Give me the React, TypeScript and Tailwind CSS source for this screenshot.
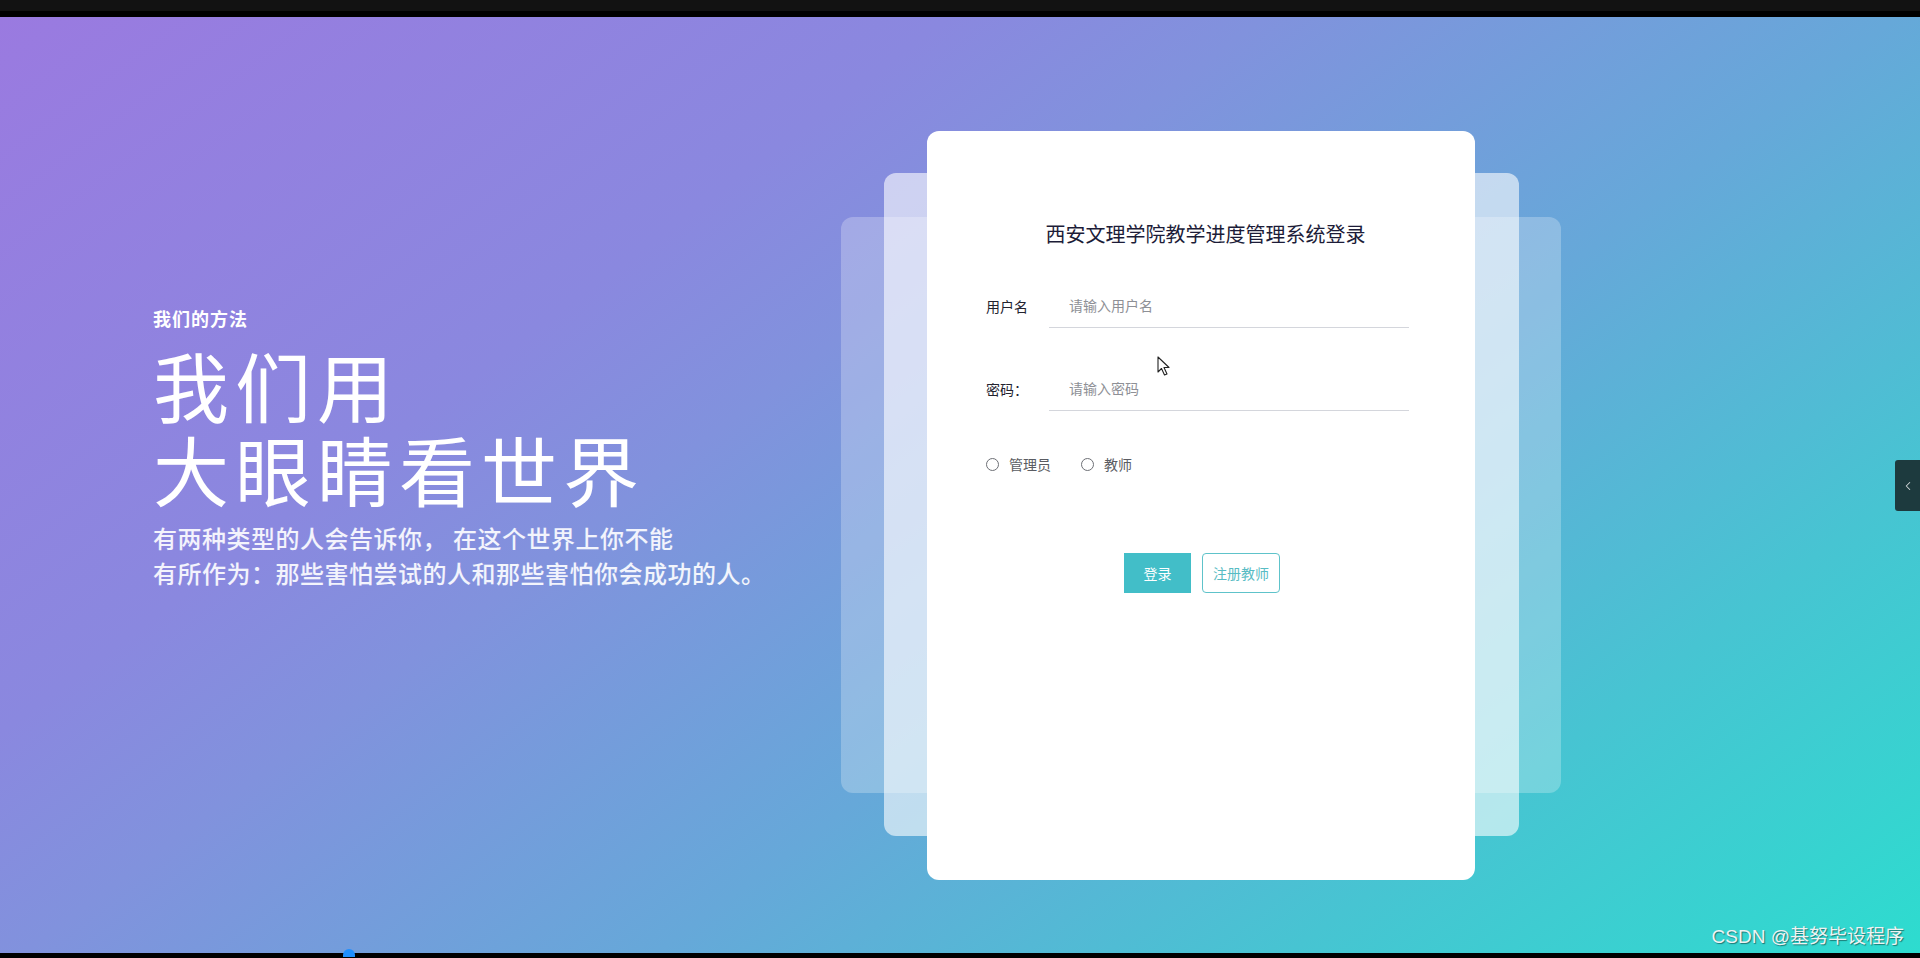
import React from "react";
import { ChevronLeft } from "lucide-react";

const cjk = "font-['Noto_Sans_CJK_SC','Noto_Sans',sans-serif]";

function Field({ label, placeholder }: { label: string; placeholder: string }) {
  return (
    <div className="flex items-center">
      <div className="w-[63px] text-[14px] text-[#23232f]">{label}</div>
      <div className="w-[360px] h-[44px] border-b border-[#d4d6dc] flex items-center pl-[20px]">
        <input
          className="w-full bg-transparent outline-none text-[14px] text-[#333] placeholder:text-[#8e9096]"
          placeholder={placeholder}
        />
      </div>
    </div>
  );
}

function Radio({ label }: { label: string }) {
  return (
    <label className="flex items-center gap-[10px] text-[14px] text-[#5a5c62]">
      <span className="w-[13px] h-[13px] rounded-full border border-[#6d6f75] bg-white" />
      {label}
    </label>
  );
}

export default function App() {
  return (
    <div className={`w-[1920px] h-[958px] bg-black flex flex-col overflow-hidden relative ${cjk}`}>
      {/* top bar */}
      <div className="h-[11px] bg-[#121212]" />
      <div className="h-[6px] bg-black" />

      <main className="relative h-[936px] flex bg-[linear-gradient(143deg,#9a7ae0_0%,#8a88df_30%,#8192dd_40%,#66a8d9_60%,#47c4d2_80%,#2ddccf_100%)]">
        {/* left copy */}
        <div className="w-[841px] pl-[153px] pt-[289px] text-white">
          <div className="text-[18px] leading-[24px] font-bold tracking-[1px]">我们的方法</div>
          <h1 className="mt-[12px] text-[76px] leading-[84px] font-normal tracking-[6px]">
            我们用
            <br />
            大眼睛看世界
          </h1>
          <p className="mt-[10px] text-[24px] leading-[35px] font-medium tracking-[0.5px] text-white/90">
            有两种类型的人会告诉你， 在这个世界上你不能
            <br />
            有所作为：那些害怕尝试的人和那些害怕你会成功的人。
          </p>
        </div>

        {/* login card stack */}
        <div className="relative w-[720px] h-[749px] mt-[114px]">
          <div className="absolute left-0 top-[86px] w-[720px] h-[576px] rounded-[12px] bg-white/25" />
          <div className="absolute left-[43px] top-[42px] w-[635px] h-[663px] rounded-[12px] bg-white/60" />
          <div className="relative mx-auto w-[548px] h-[749px] rounded-[12px] bg-white pl-[59px] pt-[89px]">
            <h2 className="w-[423px] text-center pl-[16px] text-[20px] leading-[28px] text-[#1c1c38]">
              西安文理学院教学进度管理系统登录
            </h2>
            <div className="mt-[36px] flex flex-col gap-[39px]">
              <Field label="用户名" placeholder="请输入用户名" />
              <Field label="密码：" placeholder="请输入密码" />
            </div>
            <div className="mt-[43px] h-[20px] flex items-center gap-[30px]">
              <Radio label="管理员" />
              <Radio label="教师" />
            </div>
            <div className="mt-[79px] flex justify-center gap-[11px] pr-[57px]">
              <button className="w-[67px] h-[40px] bg-[#42bec8] text-white text-[14px]">登录</button>
              <button className="w-[78px] h-[40px] rounded-[4px] border border-[#5ec3ca] bg-white text-[#58bcc4] text-[14px]">
                注册教师
              </button>
            </div>
          </div>
        </div>

        {/* mouse pointer */}
        <svg className="absolute left-[1157px] top-[339px]" width="14" height="21" viewBox="0 0 14 21">
          <path d="M1 1 L1 16 L4.5 12.5 L7.5 19 L10 18 L7 11.5 L12 11.5 Z" fill="#fff" stroke="#222" strokeWidth="1.1" strokeLinejoin="round" />
        </svg>

        {/* side tab */}
        <div className="absolute right-0 top-[443px] w-[25px] h-[51px] rounded-l-[3px] bg-[#1d3a3e] flex items-center justify-center">
          <ChevronLeft className="w-[14px] h-[14px] text-[#d0d6d8]" strokeWidth={1.8} />
        </div>

        {/* watermark */}
        <div className="absolute right-[16px] bottom-[3px] text-[19px] leading-[26px] text-[#eef3f3] [text-shadow:1px_1px_1px_rgba(0,0,0,0.45)] font-['Liberation_Sans','Noto_Sans_CJK_SC',sans-serif]">
          CSDN @基努毕设程序
        </div>
      </main>

      <div className="relative h-[5px] bg-black">
        <div className="absolute left-[343px] -top-[4px] w-[12px] h-[8px] rounded-t-full bg-[#1e8fff]" />
      </div>
    </div>
  );
}
